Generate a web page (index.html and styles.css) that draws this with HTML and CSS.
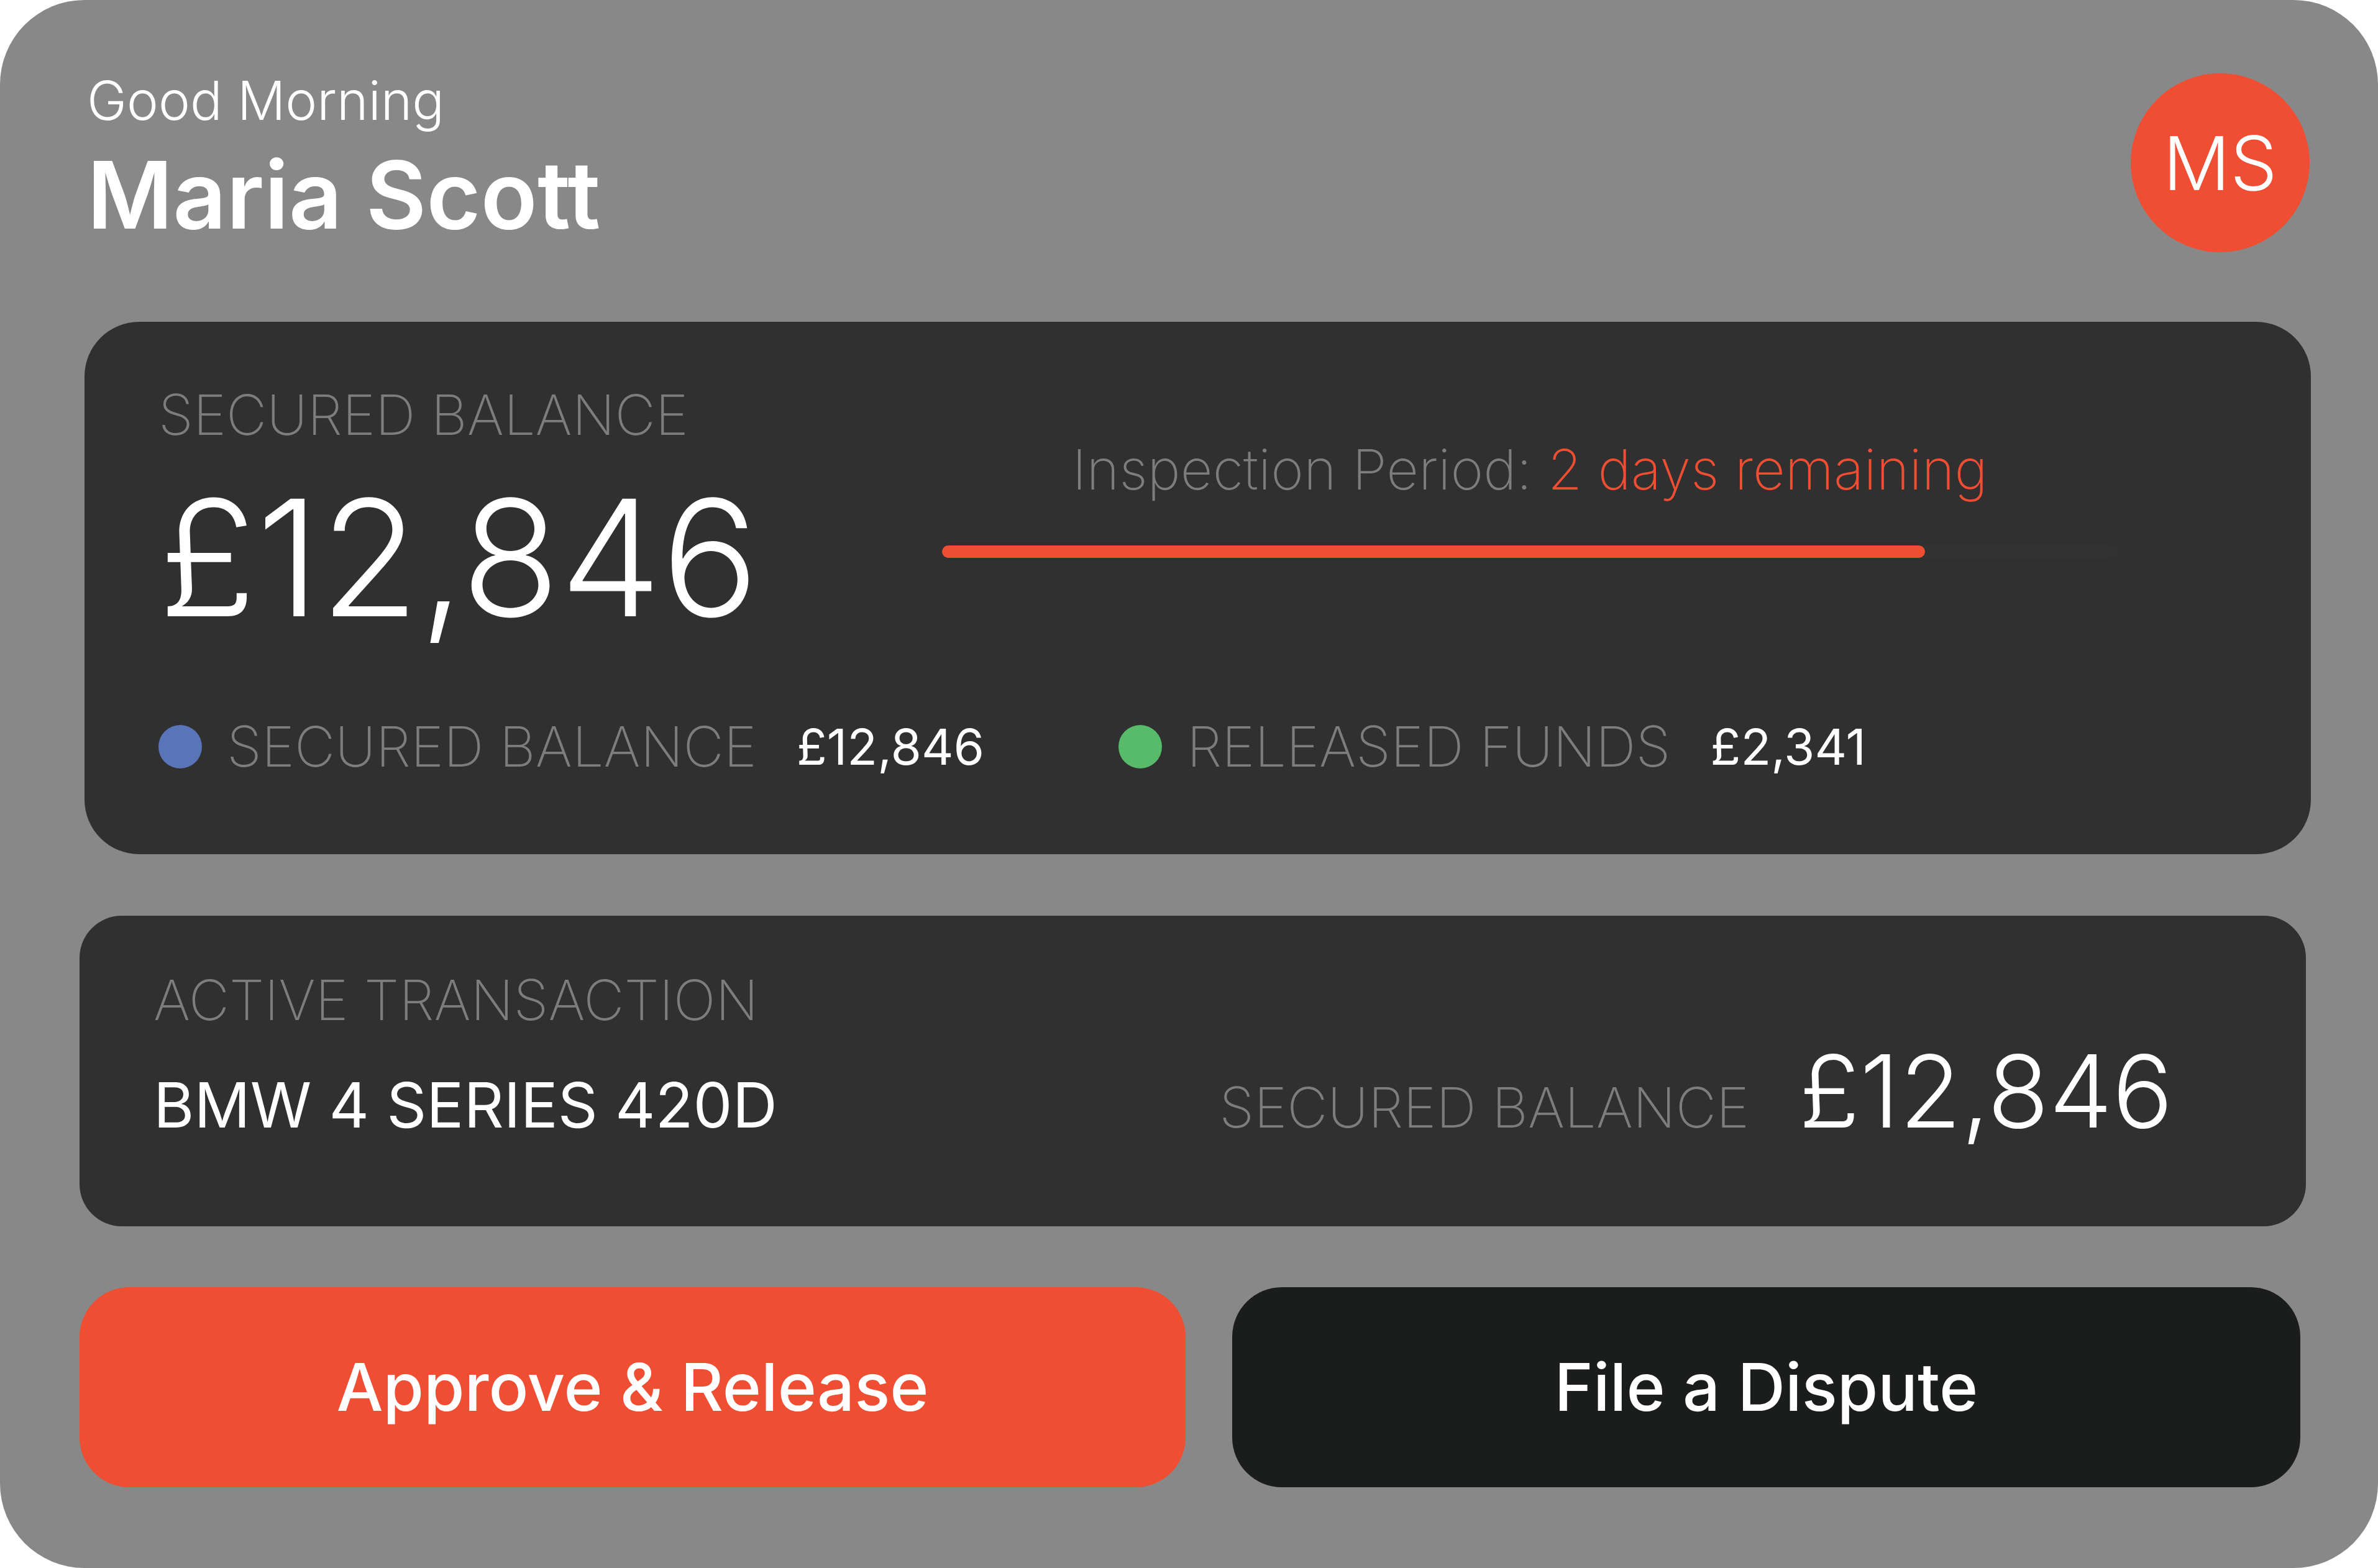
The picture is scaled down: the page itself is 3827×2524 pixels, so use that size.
FILE: index.html
```html
<!DOCTYPE html>
<html lang="en">
<head>
<meta charset="utf-8">
<meta name="viewport" content="width=device-width, initial-scale=1">
<title>Secured balance</title>
<link rel="stylesheet" href="styles.css">
</head>
<body>
<main class="app">
  <header class="header">
    <div class="greeting">
      <p class="greeting-text">Good Morning</p>
      <h1 class="greeting-name">Maria Scott</h1>
    </div>
    <div class="avatar">MS</div>
  </header>

  <section class="panel balance">
    <div class="overview">
      <div class="total">
        <h2 class="label">SECURED BALANCE</h2>
        <p class="total-amount">£12,846</p>
      </div>
      <div class="inspection">
        <label class="label inspection-text" for="inspection">Inspection Period: <span class="accent">2 days remaining</span></label>
        <progress class="inspection-bar" id="inspection" value="836" max="1000"></progress>
      </div>
    </div>
    <dl class="legend">
      <div class="legend-item">
        <dt class="label legend-label"><span class="dot dot-secured"></span>SECURED BALANCE</dt>
        <dd class="legend-value">£12,846</dd>
      </div>
      <div class="legend-item">
        <dt class="label legend-label"><span class="dot dot-released"></span>RELEASED FUNDS</dt>
        <dd class="legend-value">£2,341</dd>
      </div>
    </dl>
  </section>

  <section class="panel transaction">
    <h2 class="label">ACTIVE TRANSACTION</h2>
    <div class="transaction-row">
      <p class="transaction-name">BMW 4 SERIES 420D</p>
      <p class="transaction-balance">
        <span class="label">SECURED BALANCE</span>
        <span class="transaction-amount">£12,846</span>
      </p>
    </div>
  </section>

  <div class="actions">
    <button class="button button-primary" type="button">Approve &amp; Release</button>
    <button class="button button-secondary" type="button">File a Dispute</button>
  </div>
</main>
</body>
</html>
```
FILE: styles.css
```css
* {
  box-sizing: border-box;
}

body,
h1,
h2,
p,
dl,
dd {
  margin: 0;
}

body {
  background: #fff;
  color: #fff;
  font-family: Inter, "Liberation Sans", sans-serif;
}

.app {
  min-height: 100vh;
  padding: 118px 108px 124px 128px;
  border-radius: 136px;
  background: #888;
}

.header {
  display: flex;
  justify-content: space-between;
  padding-left: 12px;
}

.greeting {
  display: grid;
  gap: 32px;
  align-content: start;
}

.greeting-text {
  font-size: 86px;
  font-weight: 300;
  line-height: 88px;
}

.greeting-name {
  font-size: 150px;
  font-weight: 600;
  line-height: 152px;
}

.avatar {
  display: grid;
  place-items: center;
  width: 288px;
  height: 288px;
  margin-right: 2px;
  border-radius: 50%;
  background: #f04e33;
  font-size: 120px;
  font-weight: 300;
}

.panel {
  background: #303030;
}

.label {
  color: #7d7d7d;
  font-size: 90px;
  font-weight: 200;
  line-height: 96px;
}

.balance {
  margin: 112px 0 0 8px;
  padding: 102px 311px 125px 119px;
  border-radius: 88px;
}

.overview {
  display: grid;
  grid-template-columns: 2fr 3fr;
}

.total-amount {
  margin-top: 54px;
  font-size: 260px;
  font-weight: 300;
  line-height: 256px;
  white-space: nowrap;
}

.inspection {
  padding-top: 88px;
}

.inspection-text {
  display: block;
  text-align: center;
}

.accent {
  color: #f04e33;
}

.inspection-bar {
  display: block;
  appearance: none;
  width: 100%;
  height: 20px;
  margin-top: 74px;
  border: 0;
  border-radius: 10px;
  background: #323232;
}

.inspection-bar::-webkit-progress-bar {
  border-radius: 10px;
  background: #323232;
}

.inspection-bar::-webkit-progress-value {
  border-radius: 10px;
  background: #f04e33;
}

.legend {
  display: grid;
  grid-template-columns: 49fr 51fr;
  margin-top: 128px;
}

.legend-item {
  display: flex;
  align-items: center;
  gap: 64px;
}

.legend-label {
  display: flex;
  align-items: center;
  gap: 40px;
}

.dot {
  width: 70px;
  height: 70px;
  border-radius: 50%;
}

.dot-secured {
  background: #5975b8;
}

.dot-released {
  background: #57bb6b;
}

.legend-value {
  font-size: 80px;
  font-weight: 400;
  line-height: 96px;
}

.transaction {
  margin: 99px 8px 0 0;
  padding: 88px 214px 138px 119px;
  border-radius: 68px;
}

.transaction-row {
  display: flex;
  justify-content: space-between;
  align-items: baseline;
  margin-top: 18px;
}

.transaction-name {
  font-size: 100px;
  font-weight: 400;
  line-height: 112px;
}

.transaction-balance {
  display: flex;
  align-items: baseline;
  gap: 80px;
}

.transaction-amount {
  font-size: 162px;
  font-weight: 300;
  line-height: 160px;
}

.actions {
  display: grid;
  grid-template-columns: 1780fr 1719fr;
  gap: 75px;
  margin: 98px 17px 0 0;
}

.button {
  height: 322px;
  padding: 0;
  border: 0;
  border-radius: 80px;
  color: #fff;
  font-family: inherit;
  font-size: 106px;
  font-weight: 500;
  line-height: 112px;
}

.button-primary {
  background: #f04e33;
}

.button-secondary {
  background: #1b1d1c;
}
```
